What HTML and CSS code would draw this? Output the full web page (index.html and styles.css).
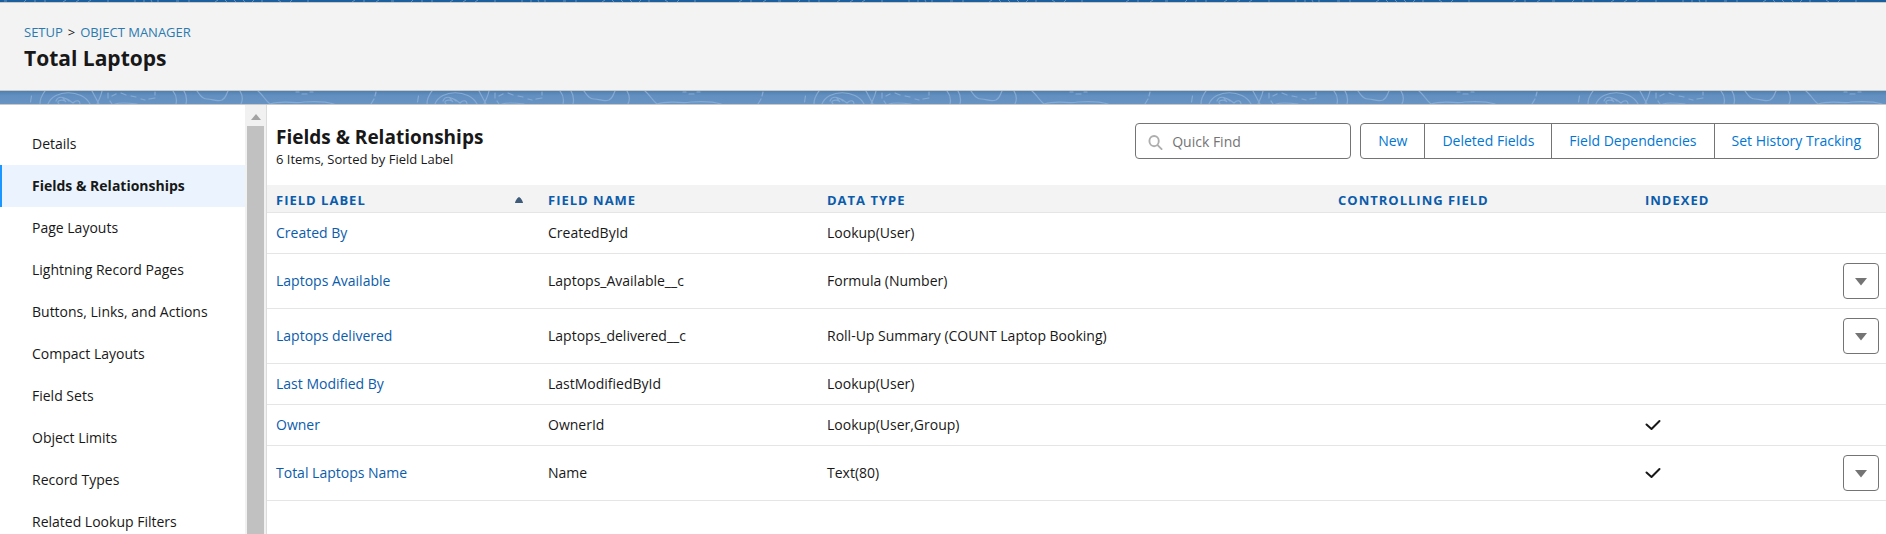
FILE: index.html
```html
<!DOCTYPE html>
<html lang="en">
<head>
<meta charset="utf-8">
<title>Total Laptops | Object Manager</title>
<link rel="stylesheet" href="styles.css">
</head>
<body>
<svg class="defs" aria-hidden="true">
  <defs>
    <pattern id="topo" width="387" height="14" patternUnits="userSpaceOnUse">
      <g fill="none" stroke="#85aad3" stroke-width="1.2" stroke-linecap="round">
        <path d="M31.500 5l-1 6M40 13c0-5 2-9 5-13M48 13C54-2 82-2 90 13M56 10c2-5 7-5 13 0M59 13c-4-4 5-5 7-2l-3-4c5 0 8 4 10 5 4-4 7-2 7 1M92 0l7 13M102 0c-1 5-3 9-5 13M108 2v5M110 10l2 3M112 5l4-2M121 2l5 2M131 5l5 1M141 8l4 1M149 8l6-1M155 4v-3M115 13c6-2 14-1 22 0"/>
        <path d="M173 0c4 5 4 9 3 13M184 0c3 5 3 9 2 13M197 0c3 4 5 8 10 8 6 0 9 3 15 1 4-2 4-5 6-9M240 0c3 5 3 9 1 13M258 0c5 4 7 9 12 13M270 13c14-4 24 0 34-2 12-1 20-1 30 2M296 1l3 0M302 3h5M310 1h3M376 1l-1 4M374 8l-3 5"/>
      </g>
    </pattern>
    <pattern id="topo-strip" width="387" height="2" patternUnits="userSpaceOnUse">
      <path d="M4 1h3M24 2l2-2M35 0v2M44 1h2M63 2l3-2M76 2l3-2M88 2l3-2M107 1h2M134 1h2M144 0v2M151 0l1 2M158 0v2M176 1h3M189 0v2M215 2l3-2M225 0l2 2M234 0l2 2M243 0l2 2M252 2l2-2M262 0v2M278 0l3 2M290 2l2-2M308 0v2M352 2l3-2M364 0v2M376 2l3-2" stroke="#5f92c0" fill="none"/>
    </pattern>
    <linearGradient id="shade" x1="0" y1="0" x2="0" y2="1">
      <stop offset="0" stop-color="#4f80b0"/>
      <stop offset="0.350" stop-color="#628fc0"/>
      <stop offset="1" stop-color="#6893c3"/>
    </linearGradient>
    <symbol id="check" viewBox="0 0 16 12"><path d="M1.500 5.500l5 4.500 8-8" fill="none" stroke="#181818" stroke-width="2" stroke-linecap="round" stroke-linejoin="round"/></symbol>
    <symbol id="down" viewBox="0 0 12 8"><path d="M0 0h12L6 7.500z" fill="#747474"/></symbol>
  </defs>
</svg>
<svg class="top-strip" aria-hidden="true"><rect width="100%" height="100%" fill="url(#topo-strip)"/></svg>
<header class="page-header">
  <nav class="crumbs" aria-label="Breadcrumb"><a href="#">SETUP</a><span>&gt;</span><a href="#">OBJECT MANAGER</a></nav>
  <h1>Total Laptops</h1>
</header>
<svg class="band" aria-hidden="true"><rect width="100%" height="100%" fill="url(#shade)"/><rect width="100%" height="100%" fill="url(#topo)"/></svg>
<div class="layout">
  <nav class="side" aria-label="Object sections">
    <a href="#">Details</a>
    <a href="#" class="active" aria-current="page">Fields &amp; Relationships</a>
    <a href="#">Page Layouts</a>
    <a href="#">Lightning Record Pages</a>
    <a href="#">Buttons, Links, and Actions</a>
    <a href="#">Compact Layouts</a>
    <a href="#">Field Sets</a>
    <a href="#">Object Limits</a>
    <a href="#">Record Types</a>
    <a href="#">Related Lookup Filters</a>
  </nav>
  <div class="scroll" aria-hidden="true">
    <svg class="scroll-up" viewBox="0 0 10 6"><path d="M5 0l5 6H0z" fill="#a3a3a3"/></svg>
    <div class="thumb"></div>
  </div>
  <main>
    <div class="toolbar">
      <div class="heading">
        <h2>Fields &amp; Relationships</h2>
        <p>6 Items, Sorted by Field Label</p>
      </div>
      <label class="search">
        <svg viewBox="0 0 16 16"><ellipse cx="6.500" cy="6.500" rx="5" ry="5.500" fill="none" stroke="#aeaeae" stroke-width="2"/><path d="M10.500 11L14.500 15" stroke="#aeaeae" stroke-width="2" stroke-linecap="round"/></svg>
        <input type="text" placeholder="Quick Find" aria-label="Quick Find">
      </label>
      <div class="buttons">
        <button type="button">New</button><button type="button">Deleted Fields</button><button type="button">Field Dependencies</button><button type="button">Set History Tracking</button>
      </div>
    </div>
    <table>
      <colgroup><col class="c-label"><col class="c-name"><col class="c-type"><col class="c-control"><col class="c-index"><col class="c-menu"></colgroup>
      <thead>
        <tr><th aria-sort="ascending"><div class="sorted">FIELD LABEL<svg viewBox="0 0 8 6"><path d="M4 0C5 0 8 4 8 6H0C0 4 3 0 4 0z" fill="#3e5b7a"/></svg></div></th><th>FIELD NAME</th><th>DATA TYPE</th><th>CONTROLLING FIELD</th><th>INDEXED</th><th></th></tr>
      </thead>
      <tbody>
        <tr><td><a href="#">Created By</a></td><td>CreatedById</td><td>Lookup(User)</td><td></td><td></td><td></td></tr>
        <tr><td><a href="#">Laptops Available</a></td><td>Laptops_Available__c</td><td>Formula (Number)</td><td></td><td></td><td><button type="button" class="menu" aria-label="Actions for Laptops Available"><svg><use href="#down"/></svg></button></td></tr>
        <tr><td><a href="#">Laptops delivered</a></td><td>Laptops_delivered__c</td><td>Roll-Up Summary (COUNT Laptop Booking)</td><td></td><td></td><td><button type="button" class="menu" aria-label="Actions for Laptops delivered"><svg><use href="#down"/></svg></button></td></tr>
        <tr><td><a href="#">Last Modified By</a></td><td>LastModifiedById</td><td>Lookup(User)</td><td></td><td></td><td></td></tr>
        <tr><td><a href="#">Owner</a></td><td>OwnerId</td><td>Lookup(User,Group)</td><td></td><td><svg class="check" role="img" aria-label="Indexed"><use href="#check"/></svg></td><td></td></tr>
        <tr><td><a href="#">Total Laptops Name</a></td><td>Name</td><td>Text(80)</td><td></td><td><svg class="check" role="img" aria-label="Indexed"><use href="#check"/></svg></td><td><button type="button" class="menu" aria-label="Actions for Total Laptops Name"><svg><use href="#down"/></svg></button></td></tr>
      </tbody>
    </table>
  </main>
</div>
</body>
</html>
```
FILE: styles.css
```css
* { box-sizing: border-box; }
body {
  margin: 0;
  min-height: 100vh;
  display: flex;
  flex-direction: column;
  font: 14px/20px "Open Sans", "Noto Sans", sans-serif;
  color: #181818;
  background: #fff;
}
a { color: #0b5cab; text-decoration: none; }
h1, h2, p { margin: 0; }
.defs { position: absolute; width: 0; height: 0; }
.top-strip { display: block; width: 100%; height: 2px; background: #1b5f9e; }
.page-header {
  padding: 19px 24px 16px;
  background: #f3f3f3;
  border-top: 1px solid #c9c9c9;
  border-bottom: 1px solid #c9c9c9;
}
.crumbs { display: flex; gap: 5px; font-size: 13px; line-height: 20px; }
.crumbs a { color: #2a7ab0; }
h1 { font-size: 21px; line-height: 32px; }
.band { display: block; width: 100%; height: 14px; border-bottom: 1px solid #c9c9c9; }
.layout { flex: 1; display: flex; height: 0; }
.side { width: 245px; padding-top: 18px; overflow: hidden; }
.side a {
  display: block;
  padding: 11px 32px;
  color: #181818;
  white-space: nowrap;
}
.side .active {
  padding-left: 30px;
  border-left: 2px solid #1b96ff;
  background: #ebf4fe;
  font-weight: 700;
}
.scroll {
  width: 22px;
  display: flex;
  flex-direction: column;
  align-items: center;
  background: #f1f1f1;
  border-right: 1px solid #dcdcdc;
}
.scroll-up { width: 10px; height: 6px; margin: 9px 0 6px; }
.thumb { flex: 1; width: 17px; background: #c1c1c1; }
main { flex: 1; min-width: 0; }
.toolbar { display: flex; align-items: flex-start; padding: 18px 7px 16px 9px; }
.heading { flex: 1; padding-top: 2px; }
h2 { font-size: 19px; line-height: 24px; }
.heading p { font-size: 13px; line-height: 20px; }
.search {
  display: flex;
  align-items: center;
  width: 216px;
  height: 36px;
  padding: 2px 12px 0;
  gap: 9px;
  margin-right: 9px;
  border: 1px solid #747474;
  border-radius: 4px;
}
.search svg { width: 15px; height: 15px; flex: none; }
.search input { flex: 1; min-width: 0; border: 0; padding: 0; outline: 0; font: inherit; background: none; }
.search input::placeholder { color: #747474; opacity: 1; }
.buttons { display: flex; border: 1px solid #747474; border-radius: 4px; }
.buttons button {
  height: 34px;
  padding: 0 17px;
  border: 0;
  background: none;
  color: #0176d3;
  font: inherit;
}
.buttons button + button { border-left: 1px solid #747474; }
table { width: 100%; table-layout: fixed; border-collapse: collapse; }
.c-label { width: 272px; }
.c-name { width: 279px; }
.c-type { width: 511px; }
.c-control { width: 307px; }
.c-menu { width: 60px; }
th {
  padding: 5px 9px 2px;
  background: #f3f3f3;
  color: #0b5cab;
  font-size: 13px;
  letter-spacing: 1px;
  text-align: left;
}
th, td { border-bottom: 1px solid #e5e5e5; }
td { padding: 0 9px; height: 41px; }
td:last-child { padding: 9px 7px; text-align: right; }
.sorted { display: flex; align-items: center; justify-content: space-between; padding-right: 7px; }
.sorted svg { width: 8px; height: 6px; }
.check { display: block; width: 16px; height: 12px; }
.menu {
  display: inline-flex;
  align-items: center;
  justify-content: center;
  vertical-align: top;
  width: 36px;
  height: 36px;
  padding: 2px 0 0;
  border: 1px solid #747474;
  border-radius: 4px;
  background: #fff;
}
.menu svg { width: 12px; height: 8px; }
```
